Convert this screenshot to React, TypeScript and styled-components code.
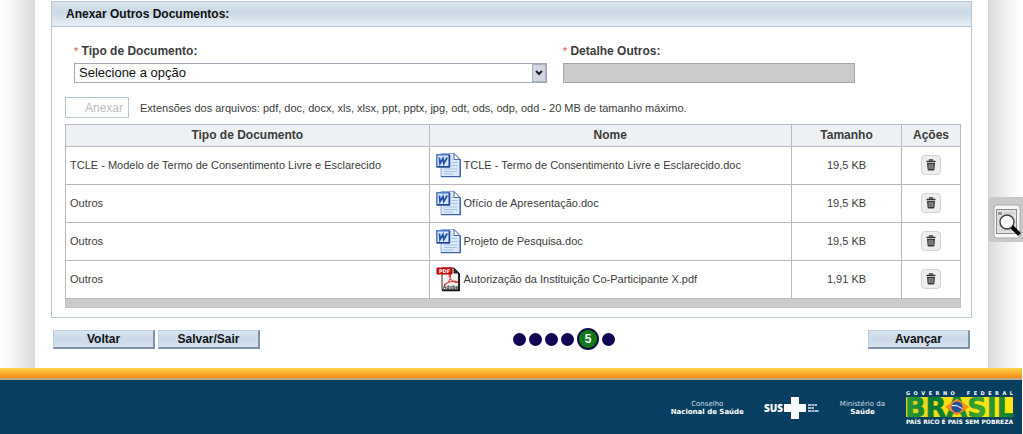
import React from "react";
import styled, { createGlobalStyle } from "styled-components";

const GlobalStyle = createGlobalStyle`
  *, *::before, *::after { box-sizing: border-box; }
  body {
    margin: 0;
    background: #fff;
    color: #3c3c3c;
    font: 12px/16px "Liberation Sans", Arial, sans-serif;
  }
  button, input, select { font-family: inherit; }
`;

const Page = styled.div`
  min-height: 100vh;
  padding-right: 1px;
  display: flex;
  flex-direction: column;
`;

const Body = styled.div`
  display: grid;
  grid-template-columns: 35px minmax(0, 1fr) 34px;
`;

const Gutter = styled.div<{ $side: "left" | "right" }>`
  background: linear-gradient(
    to ${(p) => p.$side},
    #d9d9d9 0,
    #e4e4e4 8px,
    #f5f5f5 22px,
    #fff 34px
  );
`;

const Main = styled.main`
  padding: 1px 16px 18px;
`;

const Panel = styled.section`
  border: 1px solid #b9c8d8;
`;

const PanelTitle = styled.h2`
  margin: 0;
  padding: 0 14px;
  height: 25px;
  font-size: 12px;
  line-height: 24px;
  color: #111;
  border-bottom: 1px solid #b3c6d8;
  background: linear-gradient(#d9e3ec 0, #c9d8e4 45%, #dbe6ef 75%, #e4edf5 100%);
`;

const PanelBody = styled.div`
  padding: 16px 10px 9px 13px;
`;

const Fields = styled.div`
  display: flex;
  gap: 16px;
  padding-left: 9px;
`;

const Field = styled.div<{ $width: string }>`
  width: ${(p) => p.$width};
  display: flex;
  flex-direction: column;
  gap: 4px;
`;

const Label = styled.label`
  font-weight: bold;
`;

const Required = styled.span`
  color: #e0504f;
  font-weight: normal;
  font-size: 11px;
`;

const SelectBox = styled.div`
  position: relative;
  height: 20px;
`;

const Select = styled.select`
  appearance: none;
  width: 100%;
  height: 20px;
  padding: 0 20px 0 4px;
  border: 1px solid #a3abb5;
  border-radius: 0;
  background: #fff;
  color: #111;
  font-size: 13px;
  line-height: 18px;
`;

const Arrow = styled.svg`
  position: absolute;
  top: 1px;
  right: 1px;
  width: 14px;
  height: 18px;
  pointer-events: none;
`;

const Input = styled.input`
  height: 20px;
  border: 1px solid #a5a5a5;
  background: #cbcbcb;
`;

const Attach = styled.div`
  display: flex;
  align-items: center;
  gap: 11px;
  margin-top: 14px;
  font-size: 11px;
`;

const AttachButton = styled.button`
  width: 64px;
  height: 21px;
  padding: 0 7px 0 19px;
  border: 1px solid #b5c8d8;
  background: #fff;
  color: #bdbdbd;
  font-size: 12px;
`;

const Table = styled.table`
  width: 100%;
  margin-top: 6px;
  border-collapse: collapse;
  table-layout: fixed;
`;

const Th = styled.th`
  height: 22px;
  padding: 0 0 2px;
  border: 1px solid #b9bdc1;
  background: #edf1f4;
  font-size: 12px;
`;

const Td = styled.td<{ $center?: boolean }>`
  height: 38px;
  padding: 0 4px 2px;
  border: 1px solid #b9b9b9;
  font-size: 11px;
  text-align: ${(p) => (p.$center ? "center" : "left")};
`;

const TableEnd = styled.td`
  height: 9px;
  padding: 0;
  background: #cbcbcb;
  border: 1px solid #c3c3c3;
`;

const FileName = styled.div`
  display: flex;
  align-items: center;
  gap: 3px;
  padding-left: 2px;
`;

const FileIcon = styled.svg`
  width: 25px;
  height: 26px;
  flex: none;
`;

const IconButton = styled.button`
  display: inline-flex;
  align-items: center;
  justify-content: center;
  width: 20px;
  height: 20px;
  padding: 0;
  vertical-align: middle;
  border: 1px solid #d3d3d3;
  border-radius: 4px;
  background: #eee;
`;

const Actions = styled.div`
  display: flex;
  justify-content: space-between;
  align-items: center;
  margin-top: 10px;
  padding: 0 2px;
`;

const ButtonGroup = styled.div`
  display: flex;
  gap: 3px;
`;

const Button = styled.button`
  width: 102px;
  height: 19px;
  padding: 0;
  border: 1px solid;
  border-color: #b9cfe5 #8292a6 #8292a6 #b9cfe5;
  border-width: 1px 2px 2px 1px;
  background: linear-gradient(#dbe5f0, #c9d8e8 50%, #d6e2ef);
  color: #111;
  font-size: 12px;
  font-weight: bold;
  line-height: 16px;
`;

const Steps = styled.ol`
  display: flex;
  align-items: center;
  gap: 3px;
  margin: 0;
  padding: 0;
  list-style: none;
`;

const Step = styled.li<{ $current?: boolean }>`
  width: ${(p) => (p.$current ? 22 : 13)}px;
  height: ${(p) => (p.$current ? 22 : 13)}px;
  border: ${(p) => (p.$current ? 2 : 0)}px solid #0b1146;
  border-radius: 50%;
  background: ${(p) => (p.$current ? "#117a18" : "#100452")};
  color: #fff;
  font-size: 12px;
  font-weight: bold;
  line-height: 18px;
  text-align: center;
`;

const Stripe = styled.div`
  height: 12px;
  border-bottom: 2px solid #b9ac88;
  background: linear-gradient(#fbd548, #f9b02f 50%, #f58a20);
`;

const Footer = styled.footer`
  flex: 1;
  display: flex;
  justify-content: flex-end;
  align-items: center;
  min-height: 54px;
  padding: 2px 8px 0 0;
  background: #083f60;
  color: #fff;
`;

const Agency = styled.p`
  margin: 0 20px 0 0;
  font: 7px/8px "DejaVu Sans", Verdana, sans-serif;
  text-align: center;
  white-space: nowrap;
  color: #cfdde6;

  strong {
    display: block;
    color: #fff;
  }
`;

const SusLogo = styled.svg`
  width: 56px;
  height: 24px;
  margin-right: 20px;
`;

const BrasilLogo = styled.svg`
  width: 109px;
  height: 36px;
`;

const SearchTab = styled.button`
  position: absolute;
  top: 197px;
  right: 0;
  width: 35px;
  height: 45px;
  padding: 5px 0 0 5px;
  border: 0;
  border-radius: 4px 0 0 4px;
  background: #c9c9c9;
  overflow: hidden;

  svg { display: block; }
`;

const WordIcon = () => (
  <FileIcon viewBox="0 0 25 26" aria-hidden="true">
    <path d="M5 1.500h13l6 6v17H5z" fill="#dce9fb" stroke="#8fabd9" />
    <path d="M24.300 7.500v17.200H5" fill="none" stroke="#3f64a8" strokeWidth="1.300" />
    <path d="M18 1.500v6h6z" fill="#fff" stroke="#4c69a2" />
    <path d="M15.500 7.500h2M15.500 10.500h6M15.500 13.500h6M8 17h13M8 19.500h13M8 22h9" stroke="#a9c1e8" strokeWidth="1.200" />
    <rect x=".8" y="2.800" width="12.500" height="12" fill="#d5e4fa" stroke="#4470be" strokeWidth="1.400" />
    <path d="M1 14.800h12.500V3" fill="none" stroke="#1f438c" strokeWidth="1.500" />
    <path d="M3.500 5.500l.5 6 3-5 .8 5 3.400-6" fill="none" stroke="#1f4fa5" strokeWidth="1.700" />
  </FileIcon>
);

const PdfIcon = () => (
  <FileIcon viewBox="0 0 25 26" aria-hidden="true">
    <path d="M6 2h12l5 5v17H6z" fill="#f1f1f1" stroke="#333" />
    <path d="M23 7v17.300H6" fill="none" stroke="#111" strokeWidth="1.800" />
    <path d="M18 2v5h5z" fill="#333" stroke="#222" />
    <path d="M8 19c4-1 7-6 6.500-9.500-.3-1.500-1.800-1-1.200 1C14.500 14 18 17 21.500 16.500c1-.8-1.500-1.500-4-1.300-4 .2-7 1.600-9 3.200" fill="none" stroke="#d44" strokeWidth="1.100" />
    <path d="M1 2h15v6H1z" fill="#d20d0d" stroke="#b50000" />
    <text x="8.500" y="7" textAnchor="middle" fill="#fff" fontFamily="DejaVu Sans, sans-serif" fontSize="5" fontWeight="bold">PDF</text>
    <text x="14.500" y="23" textAnchor="middle" fill="#222" fontFamily="Liberation Sans, sans-serif" fontSize="5" fontWeight="bold">Adobe</text>
  </FileIcon>
);

const TrashIcon = () => (
  <svg width="10" height="12" viewBox="0 0 10 12" aria-hidden="true">
    <path d="M3.500 1.500V.8h3v.7M.5 2.500h9" fill="none" stroke="#333" strokeWidth="1.300" />
    <path d="M1 4h8l-.6 6.500q-.1.900-1 .9H2.600q-.9 0-1-.9z" fill="#383838" />
    <path d="M3.200 5v5M5 5v5M6.800 5v5" stroke="#c9c9c9" strokeWidth=".8" />
  </svg>
);

const documents = [
  { type: "TCLE - Modelo de Termo de Consentimento Livre e Esclarecido", name: "TCLE - Termo de Consentimento Livre e Esclarecido.doc", size: "19,5 KB" },
  { type: "Outros", name: "Ofício de Apresentação.doc", size: "19,5 KB" },
  { type: "Outros", name: "Projeto de Pesquisa.doc", size: "19,5 KB" },
  { type: "Outros", name: "Autorização da Instituição Co-Participante X.pdf", size: "1,91 KB" },
];

export default function App() {
  return (
    <Page>
      <GlobalStyle />
      <Body>
        <Gutter $side="left" />
        <Main>
          <Panel>
            <PanelTitle>Anexar Outros Documentos:</PanelTitle>
            <PanelBody>
              <Fields>
                <Field $width="53.300%">
                  <Label htmlFor="tipo"><Required>*</Required> Tipo de Documento:</Label>
                  <SelectBox>
                    <Select id="tipo">
                      <option>Selecione a opção</option>
                    </Select>
                    <Arrow viewBox="0 0 14 18" aria-hidden="true">
                      <rect x=".5" y=".5" width="13" height="17" fill="#d3d7e4" stroke="#aab0c2" />
                      <path d="M4 7l3 3 3-3" fill="none" stroke="#222" strokeWidth="2" />
                    </Arrow>
                  </SelectBox>
                </Field>
                <Field $width="33%">
                  <Label htmlFor="detalhe"><Required>*</Required> Detalhe Outros:</Label>
                  <Input id="detalhe" type="text" disabled />
                </Field>
              </Fields>
              <Attach>
                <AttachButton type="button" disabled>Anexar</AttachButton>
                <span>Extensões dos arquivos: pdf, doc, docx, xls, xlsx, ppt, pptx, jpg, odt, ods, odp, odd - 20 MB de tamanho máximo.</span>
              </Attach>
              <Table>
                <colgroup>
                  <col />
                  <col style={{ width: "40.500%" }} />
                  <col style={{ width: "110px" }} />
                  <col style={{ width: "59px" }} />
                </colgroup>
                <thead>
                  <tr>
                    <Th>Tipo de Documento</Th>
                    <Th>Nome</Th>
                    <Th>Tamanho</Th>
                    <Th>Ações</Th>
                  </tr>
                </thead>
                <tbody>
                  {documents.map((d) => (
                    <tr key={d.name}>
                      <Td>{d.type}</Td>
                      <Td>
                        <FileName>
                          {d.name.endsWith(".pdf") ? <PdfIcon /> : <WordIcon />}
                          {d.name}
                        </FileName>
                      </Td>
                      <Td $center>{d.size}</Td>
                      <Td $center>
                        <IconButton type="button" aria-label="Excluir"><TrashIcon /></IconButton>
                      </Td>
                    </tr>
                  ))}
                </tbody>
                <tfoot>
                  <tr><TableEnd colSpan={4} /></tr>
                </tfoot>
              </Table>
            </PanelBody>
          </Panel>
          <Actions>
            <ButtonGroup>
              <Button type="button">Voltar</Button>
              <Button type="button">Salvar/Sair</Button>
            </ButtonGroup>
            <Steps>
              {[1, 2, 3, 4, 5, 6].map((n) => (
                <Step key={n} $current={n === 5}>{n === 5 ? n : null}</Step>
              ))}
            </Steps>
            <ButtonGroup>
              <Button type="button">Avançar</Button>
            </ButtonGroup>
          </Actions>
        </Main>
        <Gutter $side="right" />
      </Body>
      <Stripe />
      <Footer>
        <Agency>Conselho<strong>Nacional de Saúde</strong></Agency>
        <SusLogo viewBox="0 0 56 24" role="img" aria-label="SUS">
          <text x="0" y="16" fill="#fff" fontFamily="Open Sans, sans-serif" fontSize="10" fontWeight="800">SUS</text>
          <path d="M27 1h8v7h7v8h-7v7h-8v-7h-7V8h7z" fill="#fff" />
          <path d="M44 9h9M44 12h6M44 15h11" stroke="#e4ecf1" strokeWidth="1.500" strokeDasharray="3 .5" />
        </SusLogo>
        <Agency>Ministério da<strong>Saúde</strong></Agency>
        <BrasilLogo viewBox="0 0 109 36" role="img" aria-label="Brasil">
          <defs>
            <linearGradient id="leaf" x1="0" y1="0" x2="1" y2="0">
              <stop offset="0" stopColor="#2f9c36" />
              <stop offset=".25" stopColor="#0a7a34" />
              <stop offset=".5" stopColor="#128a35" />
              <stop offset=".68" stopColor="#3fa52f" />
              <stop offset="1" stopColor="#0a7a34" />
            </linearGradient>
            <linearGradient id="field" x1="0" y1="0" x2="1" y2="0">
              <stop offset="0" stopColor="#d3d51f" />
              <stop offset=".35" stopColor="#f3df1a" />
              <stop offset="1" stopColor="#ffe512" />
            </linearGradient>
          </defs>
          <g fill="#fff" fontFamily="DejaVu Sans, sans-serif" fontSize="5" fontWeight="bold">
            <text x="1" y="5" xmlSpace="preserve">G  O  V  E  R  N  O</text>
            <text x="108" y="5" textAnchor="end" xmlSpace="preserve">F  E  D  E  R  A  L</text>
          </g>
          <path d="M1 7h107v20H1z" fill="url(#field)" />
          <text x="0" y="27" fill="url(#leaf)" stroke="url(#leaf)" strokeWidth=".6" fontFamily="DejaVu Sans, sans-serif" fontSize="27" fontWeight="bold">BRASIL</text>
          <path d="M52 8.500l12 8.500-12 8.500L40 17z" fill="#f58a20" />
          <circle cx="52" cy="17" r="5.500" fill="#284f9b" />
          <path d="M47 15.500q5-1 10 3" fill="none" stroke="#fff" />
          <text x="1" y="34" fill="#fff" fontFamily="DejaVu Sans, sans-serif" fontSize="6" fontWeight="bold">PAÍS RICO É PAÍS SEM POBREZA</text>
        </BrasilLogo>
      </Footer>
      <SearchTab type="button" aria-label="Pesquisar">
        <svg width="30" height="36" viewBox="0 0 30 36" aria-hidden="true">
          <rect x="1" y="1" width="26" height="33" rx="3" fill="#f7f7f7" stroke="#aaa" />
          <rect x="3.500" y="5.500" width="20" height="24" fill="#e1e1e1" stroke="#8b8b8b" />
          <path d="M5 8h4v3H5z" fill="#999" />
          <path d="M11 9h10M6 14h14M6 18h14M6 22h14M6 26h14" stroke="#c2c2c2" />
          <circle cx="14" cy="18" r="7" fill="#fff" stroke="#444" strokeWidth="1.500" />
          <path d="M19 23l7.500 7.500" stroke="#000" strokeWidth="4" />
        </svg>
      </SearchTab>
    </Page>
  );
}
